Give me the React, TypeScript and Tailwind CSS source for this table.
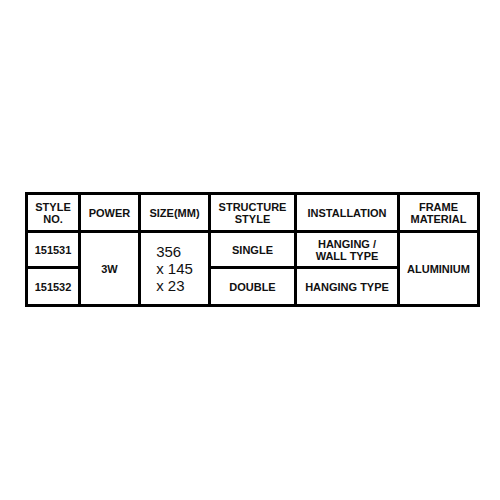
const cell = "border-[3px] border-black text-center align-middle p-0";

export default function App() {
  return (
    <div className="w-[500px] h-[500px] bg-white pt-[192px] pl-[25px] font-['Liberation_Sans',Arial,sans-serif] text-[#111]">
      <table className="w-[455px] table-fixed border-collapse border-[3px] border-black text-[11px] font-bold leading-[12px]">
        <colgroup>
          <col className="w-[53px]" />
          <col className="w-[60px]" />
          <col className="w-[70px]" />
          <col className="w-[86px]" />
          <col className="w-[103px]" />
          <col className="w-[80px]" />
        </colgroup>
        <tbody>
          {/* Header */}
          <tr className="h-[38px]">
            <td className={cell}>STYLE<br />NO.</td>
            <td className={cell}>POWER</td>
            <td className={cell}>SIZE(MM)</td>
            <td className={cell}>STRUCTURE<br />STYLE</td>
            <td className={cell}>INSTALLATION</td>
            <td className={cell}>FRAME<br />MATERIAL</td>
          </tr>
          <tr className="h-[36px]">
            <td className={cell}>151531</td>
            <td className={cell} rowSpan={2}>3W</td>
            <td className={cell} rowSpan={2}>
              <div className="inline-block text-left text-[15px] leading-[17px] font-normal">
                356<br />x 145<br />x 23
              </div>
            </td>
            <td className={cell}>SINGLE</td>
            <td className={cell}>HANGING /<br />WALL TYPE</td>
            <td className={cell} rowSpan={2}>ALUMINIUM</td>
          </tr>
          <tr className="h-[38px]">
            <td className={cell}>151532</td>
            <td className={cell}>DOUBLE</td>
            <td className={cell}>HANGING TYPE</td>
          </tr>
        </tbody>
      </table>
    </div>
  );
}
